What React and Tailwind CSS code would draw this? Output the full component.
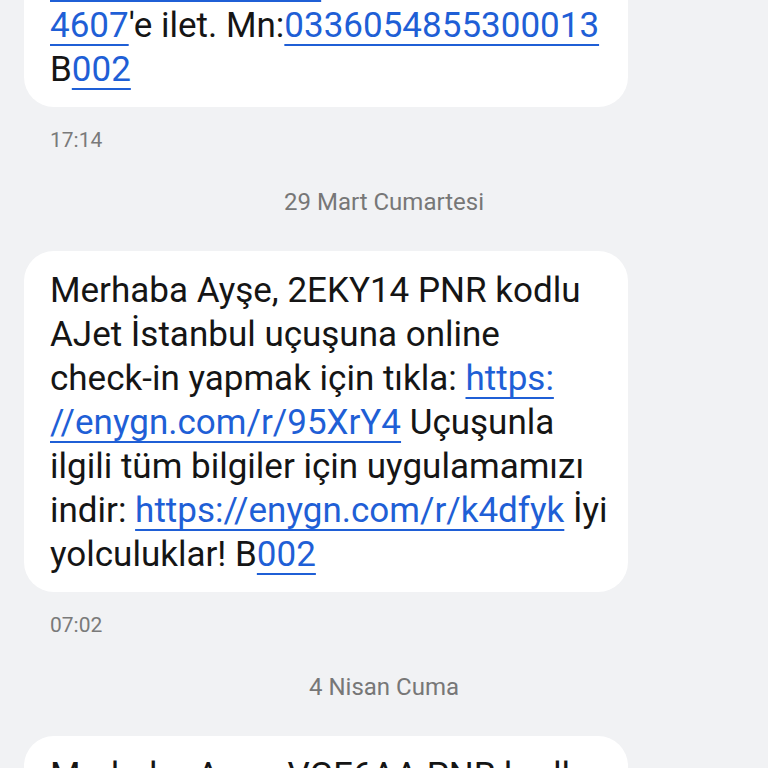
import React from "react";

const FONT = { fontFamily: "Roboto, 'Noto Sans', sans-serif" };

function Link({ children }) {
  return (
    <span className="text-[#1f5fd6] underline decoration-[1.5px] underline-offset-[7px]">
      {children}
    </span>
  );
}

function Bubble({ lines, className = "" }) {
  return (
    <div
      className={`w-[604px] rounded-[30px] bg-white pl-[26px] pr-4 pt-[18px] pb-[15px] text-[35px] leading-[44px] text-[#151515] ${className}`}
    >
      {lines.map((line, i) => (
        <div key={i} className="whitespace-nowrap">
          {line}
        </div>
      ))}
    </div>
  );
}

function Time({ children }) {
  return (
    <div className="mt-[21px] pl-[26px] text-[21px] leading-[24px] text-[#7a7a7a]">
      {children}
    </div>
  );
}

function DateLabel({ children }) {
  return (
    <div className="mt-[36px] text-center text-[24px] leading-[28px] text-[#777777]">
      {children}
    </div>
  );
}

export default function App() {
  return (
    <div className="h-[768px] overflow-hidden bg-[#f1f2f4]" style={FONT}>
      <div className="px-6">
        <Bubble
          className="-mt-[58px]"
          lines={[
            <>
              <Link>enygn.com/r/444</Link>
            </>,
            <>
              <Link>4607</Link>'e ilet. Mn:<Link>0336054855300013</Link>
            </>,
            <>
              B<Link>002</Link>
            </>,
          ]}
        />
        <Time>17:14</Time>
        <DateLabel>29 Mart Cumartesi</DateLabel>
        <Bubble
          className="mt-[35px]"
          lines={[
            "Merhaba Ayşe, 2EKY14 PNR kodlu",
            "AJet İstanbul uçuşuna online",
            <>
              check-in yapmak için tıkla: <Link>https:</Link>
            </>,
            <>
              <Link>//enygn.com/r/95XrY4</Link> Uçuşunla
            </>,
            "ilgili tüm bilgiler için uygulamamızı",
            <>
              indir: <Link>https://enygn.com/r/k4dfyk</Link> İyi
            </>,
            <>
              yolculuklar! B<Link>002</Link>
            </>,
          ]}
        />
        <Time>07:02</Time>
        <DateLabel>4 Nisan Cuma</DateLabel>
        <Bubble
          className="mt-[35px]"
          lines={[
            "Merhaba Ayşe, VGF6AA PNR kodlu",
            "AJet İstanbul uçuşuna online",
          ]}
        />
      </div>
    </div>
  );
}
